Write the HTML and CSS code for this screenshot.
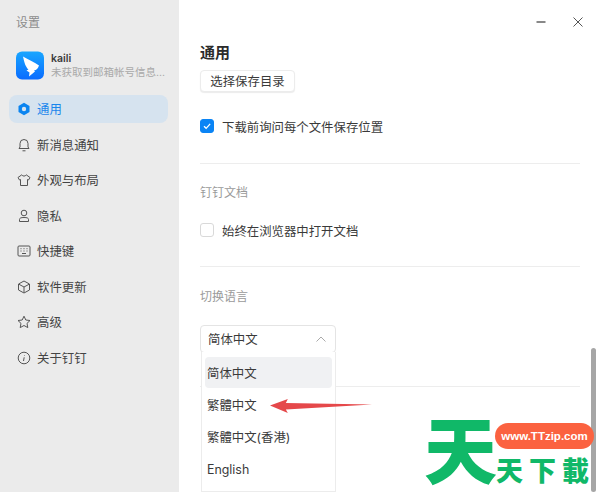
FILE: index.html
```html
<!DOCTYPE html>
<html lang="zh-CN">
<head>
<meta charset="utf-8">
<title>设置</title>
<link rel="stylesheet" href="styles.css">
</head>
<body>
<div class="app">
  <aside class="sidebar">
    <div class="app-title">设置</div>
    <div class="profile">
      <svg class="avatar" viewBox="0 0 28 28"><defs><linearGradient id="g" x1="0" y1="0" x2="0" y2="1"><stop offset="0" stop-color="#18a6ff"/><stop offset="1" stop-color="#0a6cff"/></linearGradient></defs><rect width="28" height="28" rx="6" fill="url(#g)"/><path d="M7 5C12 8 19 11 23 14C22 17 20.500 18.500 18 19L19 20L13 25L13.500 21L10.500 19L12.500 18C10 16 8.500 12 7 5Z" fill="#fff"/></svg>
      <div class="profile-text">
        <div class="profile-name">kaili</div>
        <div class="profile-mail">未获取到邮箱帐号信息...</div>
      </div>
    </div>
    <nav class="nav">
      <div class="nav-item active"><svg class="nav-icon" viewBox="0 0 14 14"><path d="M7 .8 12.500 4v6L7 13.200 1.500 10V4Z" fill="#0a84f0"/><circle cx="7" cy="7" r="2.200" fill="#d6e3ef"/></svg><span>通用</span></div>
      <div class="nav-item"><svg class="nav-icon" viewBox="0 0 14 14"><path d="M2 10.500h10L11 9V5.500a4 4 0 0 0-8 0V9ZM5.500 12.800h3" class="stroke"/></svg><span>新消息通知</span></div>
      <div class="nav-item"><svg class="nav-icon" viewBox="0 0 14 14"><path d="M4.800 1.800 1 4.500 2.500 7 3.500 6.500V12.500H10.500V6.500L11.500 7 13 4.500 9.200 1.800C8.500 3.500 5.500 3.500 4.800 1.800Z" class="stroke"/></svg><span>外观与布局</span></div>
      <div class="nav-item"><svg class="nav-icon" viewBox="0 0 14 14"><circle cx="7" cy="4" r="2.800" class="stroke"/><path d="M2.500 10.500C2.500 9 4 8.500 7 8.500S11.500 9 11.500 10.500V12.500H2.500Z" class="stroke"/></svg><span>隐私</span></div>
      <div class="nav-item"><svg class="nav-icon" viewBox="0 0 14 14"><rect x="1" y="2" width="12" height="10" rx="1" class="stroke"/><path d="M3.500 4.700h1M6.500 4.700h1M9.500 4.700h1M3.500 7h1M6.500 7h1M9.500 7h1M5 9.500h4" class="stroke"/></svg><span>快捷键</span></div>
      <div class="nav-item"><svg class="nav-icon" viewBox="0 0 14 14"><path d="M7 1 12.500 4v6L7 13 1.500 10V4ZM2 4.300 7 7l5-2.700M7 7v5.500" class="stroke"/></svg><span>软件更新</span></div>
      <div class="nav-item"><svg class="nav-icon" viewBox="0 0 14 14"><path d="M7 1.200 8.800 5 13 5.500 10 8.400 10.800 12.600 7 10.500 3.200 12.600 4 8.400 1 5.500 5.200 5Z" class="stroke"/></svg><span>高级</span></div>
      <div class="nav-item"><svg class="nav-icon" viewBox="0 0 14 14"><circle cx="7" cy="7" r="5.800" class="stroke"/><path d="M7.500 4V4.500M7.200 6.300 6.500 10" class="stroke"/></svg><span>关于钉钉</span></div>
    </nav>
  </aside>

  <main class="main">
    <div class="window-controls">
      <svg class="win-icon" viewBox="0 0 12 12"><path d="M1.500 6h9" class="win-stroke"/></svg>
      <svg class="win-icon" viewBox="0 0 12 12"><path d="M1.500 1.500l9 9M10.500 1.500l-9 9" class="win-stroke thin"/></svg>
    </div>
    <section class="section first">
      <h1 class="page-title">通用</h1>
      <button class="btn">选择保存目录</button>
      <label class="check-row gap-top">
        <span class="check on"><svg viewBox="0 0 14 14"><path d="M3.500 7.200 6 9.700 10.700 4.500" fill="none" stroke="#fff" stroke-width="1.500"/></svg></span>
        <span class="check-text">下载前询问每个文件保存位置</span>
      </label>
    </section>
    <section class="section docs">
      <div class="section-label">钉钉文档</div>
      <label class="check-row label-gap">
        <span class="check"></span>
        <span class="check-text">始终在浏览器中打开文档</span>
      </label>
    </section>
    <section class="section lang">
      <div class="section-label">切换语言</div>
      <div class="select-wrap">
        <div class="select"><span>简体中文</span><svg class="chevron" viewBox="0 0 12 8"><path d="M1.500 6.500 6 2l4.500 4.500" fill="none" stroke="#aaa" stroke-width="1"/></svg></div>
        <div class="menu">
          <div class="menu-item selected">简体中文</div>
          <div class="menu-item">繁體中文</div>
          <div class="menu-item">繁體中文(香港)</div>
          <div class="menu-item">English</div>
        </div>
        <svg class="arrow" viewBox="0 0 104 14"><path d="M0 6.500 18 0 16 4 103 5.500 16 10.500 18 14Z" fill="#e5484a"/></svg>
      </div>
    </section>
    <div class="section-rule"></div>
    <div class="scrollbar"></div>
    <div class="watermark">
      <span class="wm-big">天</span>
      <span class="wm-pill">www.TTzip.com</span>
      <span class="wm-small">天下載</span>
    </div>
  </main>
</div>
</body>
</html>
```
FILE: styles.css
```css
* { box-sizing: border-box; }
html, body { margin: 0; height: 492px; overflow: hidden; }
body { font-family: Inter, "Noto Sans CJK SC", sans-serif; font-size: 12.400px; color: #3a3a3a; background: #fff; }
.app { display: flex; height: 492px; }

.sidebar { width: 179px; flex: none; background: #ebebeb; padding: 15px 11px 0 9px; }
.app-title { font-size: 12px; line-height: 15px; color: #8b8b8b; padding-left: 7px; }
.profile { display: flex; align-items: center; gap: 7px; padding-left: 7px; margin-top: 21px; }
.avatar { width: 28px; height: 29px; flex: none; }
.profile-text { min-width: 0; padding-top: 1px; }
.profile-name { font-size: 10.500px; line-height: 13px; font-weight: 600; color: #3b3b3b; }
.profile-mail { font-size: 10.500px; line-height: 15px; color: #a9a9a9; white-space: nowrap; }

.nav { display: flex; flex-direction: column; gap: 7.500px; margin-top: 15px; }
.nav-item { height: 28px; display: flex; align-items: center; gap: 6px; padding-left: 8px; border-radius: 8px; color: #444; white-space: nowrap; }
.nav-item.active { background: #d6e3ef; color: #1a86ec; }
.nav-icon { width: 14px; height: 14px; flex: none; }
.stroke { fill: none; stroke: #555; stroke-width: 1; }

.main { position: relative; flex: 1; min-width: 0; padding: 0 20px 0 21px; overflow: hidden; }
.window-controls { display: flex; justify-content: flex-end; align-items: center; gap: 25px; height: 44px; margin-right: -4px; }
.win-icon { width: 12px; height: 12px; }
.win-stroke { fill: none; stroke: #555; stroke-width: 1.400; }
.win-stroke.thin { stroke-width: 1; }

.section { border-bottom: 1px solid #ededed; }
.section.first { height: 120px; }
.section.docs { height: 103px; padding-top: 21px; }
.section.lang { border-bottom: 0; padding-top: 22px; }
.page-title { margin: 0; font-size: 15px; line-height: 18px; font-weight: 600; color: #2b2b2b; }
.btn { display: block; margin-top: 8px; width: 95px; height: 22px; padding: 0; font: inherit; color: #3a3a3a; background: #fff; border: 1px solid #ececec; border-radius: 4px; box-shadow: 0 1px 1px #ececec; }
.check-row { display: flex; align-items: center; gap: 8px; height: 18px; }
.check-text { padding-top: 2px; }
.gap-top { margin-top: 25px; }
.label-gap { margin-top: 21px; }
.check { width: 14px; height: 14px; flex: none; border: 1px solid #d9d9d9; border-radius: 3px; background: #fff; display: block; }
.check.on { background: #0a84f5; border-color: #0a84f5; }
.check.on svg { display: block; width: 12px; height: 12px; }
.section-label { font-size: 12px; line-height: 15px; color: #9a9a9a; }

.select-wrap { position: relative; z-index: 1; width: 136px; margin-top: 21px; }
.select { height: 28px; display: flex; align-items: center; justify-content: space-between; padding: 0 8px 1px 7px; border: 1px solid #e4e4e4; border-radius: 4px; background: #fff; }
.chevron { width: 12px; height: 8px; }
.menu { position: absolute; left: 1px; right: 0; top: 27px; height: 140px; padding: 5px 3px 0; background: #fff; border: 1px solid #ececec; border-top: 0; display: flex; flex-direction: column; }
.menu-item { flex: none; height: 32px; line-height: 35px; padding-left: 2px; white-space: nowrap; border-radius: 4px; color: #3a3a3a; }
.menu-item.selected { height: 31px; line-height: 33px; background: #f0f1f3; }
.arrow { position: absolute; left: 70px; top: 74px; width: 103px; height: 14px; }

.section-rule { position: absolute; left: 21px; right: 20px; top: 386px; height: 1px; background: #ededed; }
.scrollbar { position: absolute; right: 4px; top: 348px; bottom: 0; width: 5px; border-radius: 3px; background: #a6a6a6; }

.watermark { position: absolute; z-index: 2; left: 246px; top: 416px; width: 175px; height: 76px; font-family: "Noto Sans CJK SC", sans-serif; color: #10b868; }
.wm-big { position: absolute; left: -1px; top: -8px; font-size: 73px; line-height: 76px; font-weight: 900; }
.wm-pill { position: absolute; left: 70px; top: 7px; width: 99px; height: 26px; line-height: 26px; text-align: center; border-radius: 13px; background: #fb6240; color: #fff; font-family: "Liberation Sans", sans-serif; font-size: 11.500px; font-weight: 700; white-space: nowrap; }
.wm-small { position: absolute; left: 71px; top: 36px; font-size: 27px; line-height: 36px; font-weight: 900; letter-spacing: 6px; white-space: nowrap; }
```
